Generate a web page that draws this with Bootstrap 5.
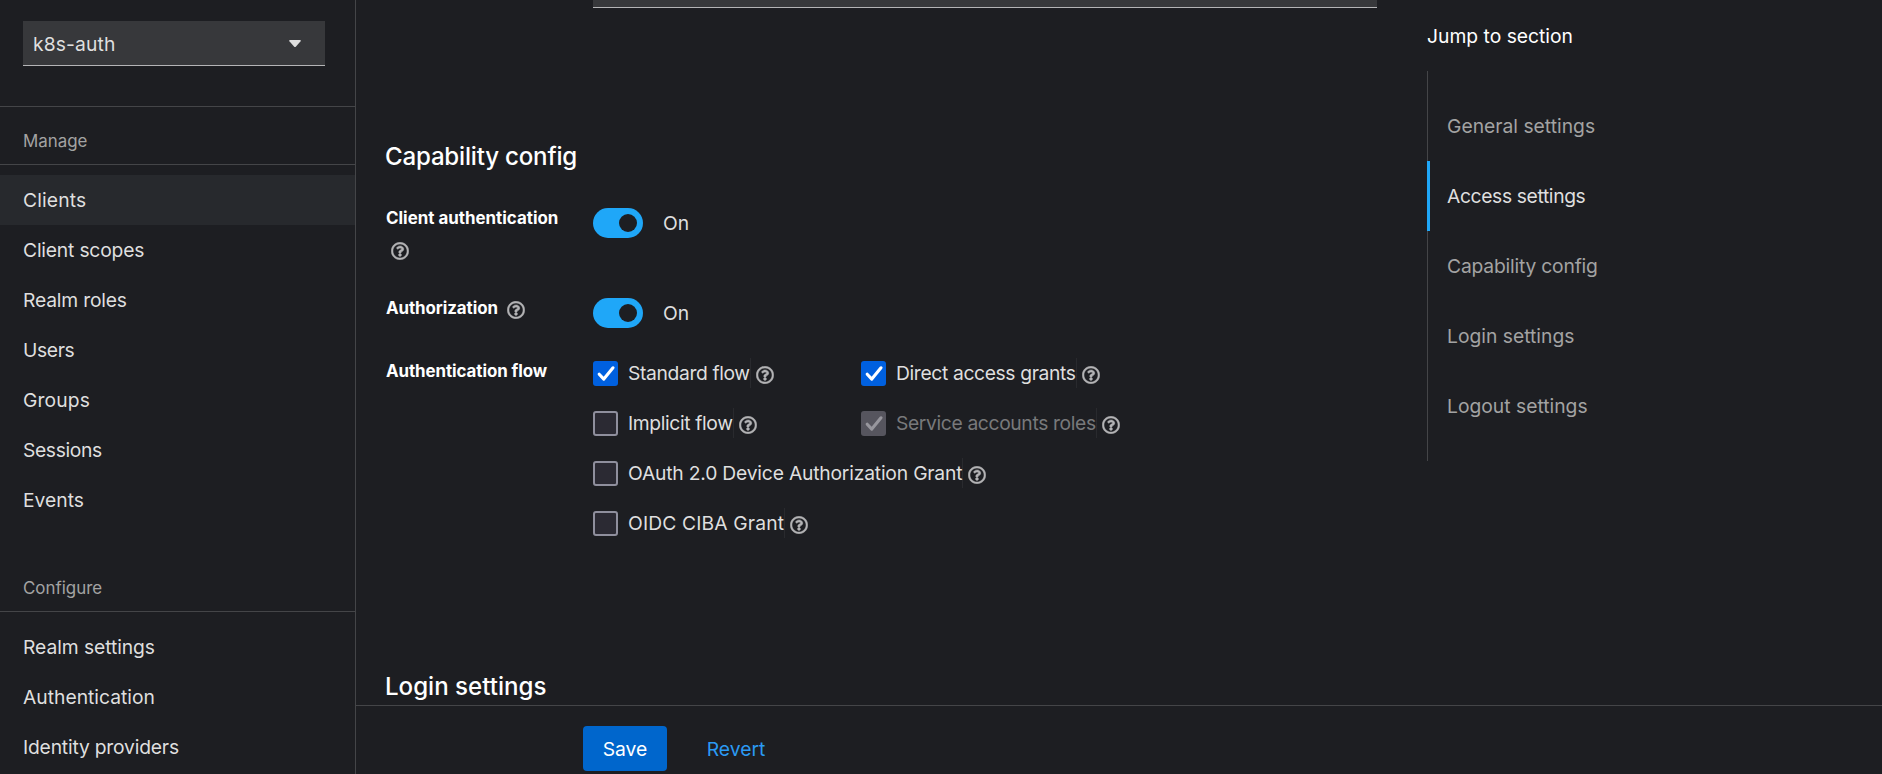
<!DOCTYPE html>
<html lang="en" data-bs-theme="dark">
<head>
<meta charset="utf-8">
<meta name="viewport" content="width=device-width, initial-scale=1">
<title>Client details</title>
<link href="https://cdn.jsdelivr.net/npm/bootstrap@5.3.0/dist/css/bootstrap.min.css" rel="stylesheet">
<style>
:root{--line:#444548;--txt:#dfdfdf;--dim:#a3a3a3;--accent:#1fa7f8}
body{background:#1d1e22;color:var(--txt);font-family:Inter,"Liberation Sans",sans-serif;font-size:19.3px;line-height:30px;height:774px;overflow:hidden}
/* letter fit */
.fit-w{letter-spacing:.14px}.fit-a{letter-spacing:-.08px}.fit-b{letter-spacing:-.2px}.fit-c{letter-spacing:-.37px}.fit-d{letter-spacing:-.48px}

.sidebar{width:356px;border-right:1px solid var(--line)}
.realm-wrap{height:107px;padding:21px 0 0 23px;border-bottom:1px solid var(--line)}
.realm{width:302px;height:45px;background:#37383b;border:0;border-bottom:1px solid #b4b4b6;border-radius:0;padding:1px 24px 0 10px;color:var(--txt);font-size:inherit;line-height:30px}
.realm svg{margin-top:-1px}
.nav-head{font-size:16.9px;color:var(--dim);height:58px;padding:19px 23px 0;line-height:30px;border-bottom:1px solid var(--line)}
.nav-head.second{height:80px;padding-top:41px;margin-top:7px}
.side-nav{padding-top:10px}
.side-nav .nav-link{height:50px;padding:10px 23px;color:var(--txt)}
.side-nav .nav-link.active{background:#27292d}

.form-area{width:1022px;padding-left:30px}
.text-field{margin-left:207px;width:784px;height:8px;background:#37383b;border-bottom:1px solid #b4b4b6}
.section-title{font-size:24.1px;font-weight:500;line-height:32px;color:#fff;margin:133px 0 0 -1px}
.section-title.next{margin-top:115px}
.form-lbl{width:207px;flex:none;font-size:16.9px;font-weight:650;color:#fff;line-height:30px}
.help{display:block;width:18px;height:18px;flex:none}
.row-auth{margin-top:35px;height:90px}
.row-auth .form-lbl{margin-top:-5px}
.row-auth .help{margin:9px 0 0 5px}
.row-authz{height:58px}
.row-authz .form-lbl{margin-top:-5px}
.row-authz .help{margin:8px 0 0 9px}
.switch-text{margin-left:20px}
.switch.form-check-input{width:50px;height:30px;margin:0;border:0;border-radius:15px;background-color:var(--accent);background-size:18px 18px;background-position:26px center;background-repeat:no-repeat;
 background-image:url("data:image/svg+xml,%3Csvg xmlns='http://www.w3.org/2000/svg' viewBox='0 0 18 18'%3E%3Ccircle cx='9' cy='9' r='9' fill='%231d1e22'/%3E%3C/svg%3E")}
.flow-item{height:50px;display:flex;align-items:flex-start}
.box.form-check-input{width:25px;height:25px;margin:5px 10px 0 0;border:2px solid #8f8f9d;border-radius:3px;background-color:#2b2a33;flex:none}
.box.form-check-input:checked{border:0;background-color:#0060df;background-size:25px 25px;
 background-image:url("data:image/svg+xml,%3Csvg xmlns='http://www.w3.org/2000/svg' viewBox='0 0 25 25'%3E%3Cpath d='M6.2 13.2l4.6 4.9L20 6.8' fill='none' stroke='%23fff' stroke-width='3.1' stroke-linecap='round' stroke-linejoin='round'/%3E%3C/svg%3E")}
.box.form-check-input:disabled{opacity:1;background-color:#56555e;
 background-image:url("data:image/svg+xml,%3Csvg xmlns='http://www.w3.org/2000/svg' viewBox='0 0 25 25'%3E%3Cpath d='M6.2 13.2l4.6 4.9L20 6.8' fill='none' stroke='%2397969d' stroke-width='3.1' stroke-linecap='round' stroke-linejoin='round'/%3E%3C/svg%3E")}
.flow-item label{border-right:1px solid #292a2e;height:30px;margin:2px 5px 0 0;white-space:nowrap}
.flow-item .box:disabled~label{color:#78797b;opacity:1}
.flow-item .help{margin-top:10px}
.flow-col{width:268px}

.jump{padding-left:49px}
.jump-title{color:#fff;padding-top:21px;height:71px}
.jump-nav{border-left:1px solid var(--line);padding:20px 0;height:390px}
.jump-nav .nav-link{height:70px;padding:20px 0 0 19px;color:var(--dim)}
.jump-nav .nav-link.active{color:var(--txt);border-left:3px solid var(--accent);margin-left:-1px;padding-left:17px}

.action-bar{height:69px;border-top:1px solid var(--line);padding:20px 0 0 227px}
.action-bar .btn{height:45px;padding:1px 0 0;font-size:inherit;line-height:44px;border:0;border-radius:4px}
.btn-save{width:84px;background:#06c;color:#fff}
.btn-revert{width:98px;margin-left:20px;color:#2b9af3}
</style>
</head>
<body>
<svg class="d-none" xmlns="http://www.w3.org/2000/svg">
  <symbol id="q" viewBox="0 0 512 512"><path fill="#b4b4b6" stroke="#b4b4b6" stroke-width="14" d="M256 8C119 8 8 119.100 8 256c0 137 111 248 248 248s248-111 248-248C504 119.100 393 8 256 8zm0 448c-110.500 0-200-89.400-200-200 0-110.500 89.500-200 200-200 110.500 0 200 89.500 200 200 0 110.500-89.400 200-200 200zm107.200-255.200c0 67.100-72.400 68.100-72.400 92.900V300c0 6.600-5.400 12-12 12h-45.600c-6.600 0-12-5.400-12-12v-8.700c0-35.700 27.100-50 47.600-61.500 17.600-9.800 28.300-16.500 28.300-29.600 0-17.200-22-28.700-39.800-28.700-23.200 0-33.900 11-48.900 30-4.100 5.100-11.500 6.100-16.700 2.100l-27.800-21.100c-5.100-3.900-6.300-11.100-2.600-16.400C184.800 131.500 214.900 112 261.800 112c49.100 0 101.500 38.300 101.500 88.800zM298 368c0 23.200-18.800 42-42 42s-42-18.800-42-42 18.800-42 42-42 42 18.800 42 42z"/></symbol>
</svg>
<div class="d-flex h-100">
  <aside class="sidebar flex-shrink-0 overflow-hidden">
    <div class="realm-wrap">
      <button class="realm btn d-flex align-items-center justify-content-between" type="button"><span class="fit-w">k8s-auth</span>
        <svg width="12" height="7" viewBox="0 0 12 7"><path fill="#dfdfdf" d="M1 0h10q1.300.2.600 1.300L7 6.400q-1 1-2 0L.4 1.300Q-.3.200 1 0z"/></svg></button>
    </div>
    <div class="nav-head">Manage</div>
    <nav class="nav flex-column flex-nowrap side-nav">
      <a class="nav-link active fit-w" href="#">Clients</a>
      <a class="nav-link fit-b" href="#">Client scopes</a>
      <a class="nav-link fit-b" href="#">Realm roles</a>
      <a class="nav-link fit-c" href="#">Users</a>
      <a class="nav-link fit-w" href="#">Groups</a>
      <a class="nav-link fit-c" href="#">Sessions</a>
      <a class="nav-link" href="#">Events</a>
    </nav>
    <div class="nav-head second">Configure</div>
    <nav class="nav flex-column flex-nowrap side-nav">
      <a class="nav-link fit-a" href="#">Realm settings</a>
      <a class="nav-link" href="#">Authentication</a>
      <a class="nav-link fit-b" href="#">Identity providers</a>
    </nav>
  </aside>

  <main class="flex-grow-1 d-flex flex-column">
    <div class="d-flex flex-grow-1 overflow-hidden">
      <section class="form-area flex-shrink-0">
        <div class="text-field"></div>
        <h2 class="section-title fit-b">Capability config</h2>
        <div class="d-flex row-auth">
          <div class="form-lbl">Client authentication
            <svg class="help"><use href="#q"/></svg></div>
          <input class="switch form-check-input" type="checkbox" checked id="s1">
          <label class="switch-text" for="s1">On</label>
        </div>
        <div class="d-flex row-authz">
          <div class="form-lbl d-flex align-items-start fit-a">Authorization
            <svg class="help"><use href="#q"/></svg></div>
          <input class="switch form-check-input" type="checkbox" checked id="s2">
          <label class="switch-text" for="s2">On</label>
        </div>
        <div class="d-flex">
          <div class="form-lbl fit-a">Authentication flow</div>
          <div>
            <div class="d-flex">
              <div class="flow-item flow-col"><input class="box form-check-input" type="checkbox" checked id="f1"><label class="fit-c" for="f1">Standard flow</label><svg class="help"><use href="#q"/></svg></div>
              <div class="flow-item"><input class="box form-check-input" type="checkbox" checked id="f2"><label class="fit-c" for="f2">Direct access grants</label><svg class="help"><use href="#q"/></svg></div>
            </div>
            <div class="d-flex">
              <div class="flow-item flow-col"><input class="box form-check-input" type="checkbox" id="f3"><label class="fit-c" for="f3">Implicit flow</label><svg class="help"><use href="#q"/></svg></div>
              <div class="flow-item"><input class="box form-check-input" type="checkbox" checked disabled id="f4"><label class="fit-c" for="f4">Service accounts roles</label><svg class="help"><use href="#q"/></svg></div>
            </div>
            <div class="flow-item"><input class="box form-check-input" type="checkbox" id="f5"><label class="fit-b" for="f5">OAuth 2.0 Device Authorization Grant</label><svg class="help"><use href="#q"/></svg></div>
            <div class="flow-item"><input class="box form-check-input" type="checkbox" id="f6"><label class="fit-w" for="f6">OIDC CIBA Grant</label><svg class="help"><use href="#q"/></svg></div>
          </div>
        </div>
        <h2 class="section-title next">Login settings</h2>
      </section>
      <aside class="jump">
        <div class="jump-title">Jump to section</div>
        <nav class="nav flex-column jump-nav">
          <a class="nav-link" href="#">General settings</a>
          <a class="nav-link active fit-c" href="#">Access settings</a>
          <a class="nav-link fit-b" href="#">Capability config</a>
          <a class="nav-link" href="#">Login settings</a>
          <a class="nav-link" href="#">Logout settings</a>
        </nav>
      </aside>
    </div>
    <div class="action-bar d-flex flex-shrink-0">
      <button class="btn btn-save" type="button">Save</button>
      <button class="btn btn-revert" type="button">Revert</button>
    </div>
  </main>
</div>
</body>
</html>
